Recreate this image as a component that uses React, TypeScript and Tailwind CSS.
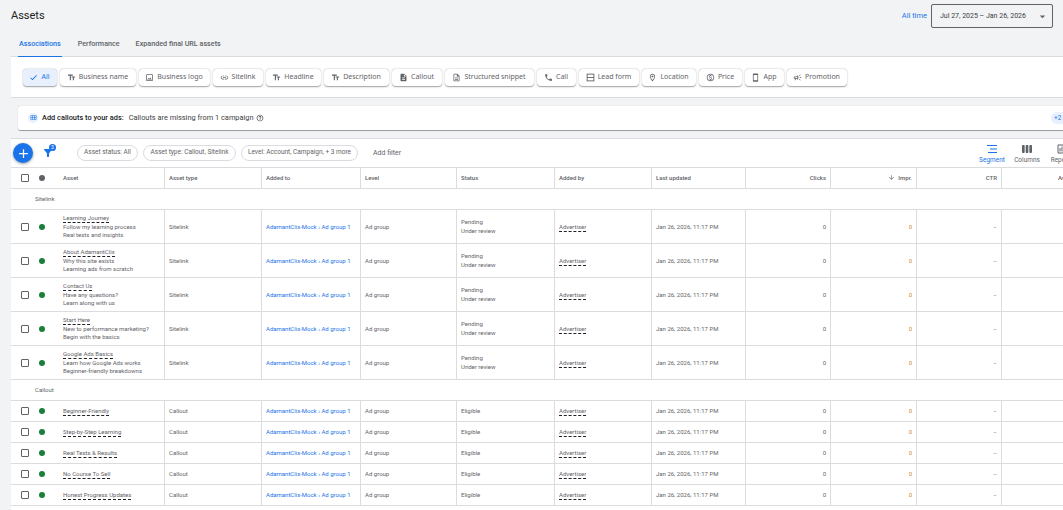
import type { ReactNode } from 'react';
import {
  MdAdd,
  MdArrowDownward,
  MdArrowDropDown,
  MdCheck,
  MdDescription,
  MdFilterAlt,
  MdLink,
  MdOutlineHelpOutline,
  MdOutlineImage,
  MdOutlineLocationOn,
  MdOutlinePaid,
  MdOutlineSmartphone,
  MdOutlineCampaign,
  MdOutlineDescription,
  MdPhone,
  MdTextFields,
  MdViewWeek,
  MdOutlineAssessment,
  MdOutlineCalendarViewMonth,
} from 'react-icons/md';

const LEAD_FORM_ICON = (
  <svg viewBox="0 0 12 12" className="size-[9px]" fill="none" stroke="currentColor" strokeWidth="1.2">
    <rect x="1.5" y="1.5" width="9" height="9" />
    <path d="M1.5 6h9" />
  </svg>
);

const CHIPS: { label: string; icon: ReactNode; width: string }[] = [
  { label: 'Business name', icon: <MdTextFields />, width: 'w-[76px]' },
  { label: 'Business logo', icon: <MdOutlineImage />, width: 'w-[71px]' },
  { label: 'Sitelink', icon: <MdLink />, width: 'w-[50px]' },
  { label: 'Headline', icon: <MdTextFields />, width: 'w-[55px]' },
  { label: 'Description', icon: <MdTextFields />, width: 'w-[65px]' },
  { label: 'Callout', icon: <MdDescription />, width: 'w-[50px]' },
  { label: 'Structured snippet', icon: <MdOutlineDescription />, width: 'w-[89px]' },
  { label: 'Call', icon: <MdPhone />, width: 'w-[39px]' },
  { label: 'Lead form', icon: LEAD_FORM_ICON, width: 'w-[60px]' },
  { label: 'Location', icon: <MdOutlineLocationOn />, width: 'w-[54px]' },
  { label: 'Price', icon: <MdOutlinePaid />, width: 'w-[43px]' },
  { label: 'App', icon: <MdOutlineSmartphone />, width: 'w-[39px]' },
  { label: 'Promotion', icon: <MdOutlineCampaign />, width: 'w-[60px]' },
];

const SITELINKS = [
  ['Learning Journey', 'Follow my learning process', 'Real tests and insights'],
  ['About AdamantClix', 'Why this site exists', 'Learning ads from scratch'],
  ['Contact Us', 'Have any questions?', 'Learn along with us'],
  ['Start Here', 'New to performance marketing?', 'Begin with the basics'],
  ['Google Ads Basics', 'Learn how Google Ads works', 'Beginner-friendly breakdowns'],
];

const CALLOUTS = [
  'Beginner-Friendly',
  'Step-by-Step Learning',
  'Real Tests & Results',
  'No Course To Sell',
  'Honest Progress Updates',
];

const COL_WIDTHS = [
  'w-[23px]',
  'w-[18px]',
  'w-[113px]',
  'w-[97px]',
  'w-[99px]',
  'w-[96px]',
  'w-[98px]',
  'w-[97px]',
  'w-[94px]',
  'w-[85px]',
  'w-[86px]',
  'w-[85px]',
  'w-[84px]',
];

const cell = 'border-b border-r border-[#dadce0] pl-[4px] pr-[4px] align-middle';
const numCell = 'border-b border-r border-[#dadce0] pl-[5px] pr-[4px] align-middle text-right';

function Checkbox() {
  return <div className="ml-[10px] size-[8px] rounded-[1px] border border-[#5f6368] bg-white" />;
}

function Dashed({ children }: { children: ReactNode }) {
  return <span className="inline-block border-b border-dashed border-[#202124] leading-[8px] text-[#5f6368]">{children}</span>;
}

function RowTail({ type, status }: { type: string; status: ReactNode }) {
  return (
    <>
      <td className={`${cell} text-[#5f6368]`}>{type}</td>
      <td className={`${cell} whitespace-nowrap text-[#1a73e8]`}>AdamantClix-Mock › Ad group 1</td>
      <td className={`${cell} text-[#5f6368]`}>Ad group</td>
      <td className={`${cell} text-[#5f6368]`}>{status}</td>
      <td className={cell}>
        <Dashed>Advertiser</Dashed>
      </td>
      <td className={`${cell} whitespace-nowrap text-[#5f6368]`}>Jan 26, 2026, 11:17 PM</td>
      <td className={`${numCell} text-[#5f6368]`}>0</td>
      <td className={`${numCell} text-[#c98a2b]`}>0</td>
      <td className={`${numCell} text-[#80868b]`}>–</td>
      <td className="border-b border-[#dadce0]" />
    </>
  );
}

function GroupRow({ label }: { label: string }) {
  return (
    <tr className="h-[21px]">
      <td colSpan={13} className="border-b border-[#dadce0] pb-[1px] pl-[24px] text-[#5f6368]">
        {label}
      </td>
    </tr>
  );
}

function StatusDot() {
  return <div className="ml-[5px] size-[6px] rounded-full bg-[#188038]" />;
}

function ToolButton({ label, icon, blue }: { label: string; icon: ReactNode; blue?: boolean }) {
  return (
    <div className={`flex w-[34px] shrink-0 flex-col items-center gap-[1px] text-[6.5px] ${blue ? 'text-[#1a73e8]' : 'text-[#5f6368]'}`}>
      <span className="text-[12px] leading-[12px]">{icon}</span>
      <span className="leading-[8px]">{label}</span>
    </div>
  );
}

export default function App() {
  return (
    <div className="h-[510px] w-[1063px] overflow-hidden bg-[#f1f3f4] pl-[11px] font-['Roboto',sans-serif] text-[6px] text-[#5f6368]">
      <div className="flex h-[32px] items-start justify-between">
        <h1 className="pt-[9px] text-[11px] leading-[14px] text-[#202124]">Assets</h1>
        <div className="flex items-center gap-[4px] pt-[4px] pr-[10px]">
          <span className="text-[7.5px] text-[#1a73e8]">All time</span>
          <div className="flex h-[24px] w-[122px] items-center justify-between rounded-[2px] border border-[#5f6368] pr-[3px] pl-[8px] text-[7px] text-[#3c4043]">
            Jul 27, 2025 – Jan 26, 2026
            <MdArrowDropDown className="text-[13px] text-[#5f6368]" />
          </div>
        </div>
      </div>

      <div className="flex h-[25px] items-stretch gap-[16px] border-b border-[#dadce0] pl-[7px] text-[7.2px] font-medium text-[#5f6368]">
        <div className="-mb-px flex items-center border-b border-[#1a73e8] px-px pt-[1px] text-[#1a73e8]">Associations</div>
        <div className="flex items-center pt-[1px]">Performance</div>
        <div className="flex items-center pt-[1px]">Expanded final URL assets</div>
      </div>

      <div className="flex h-[41px] items-center gap-[3px] border-b border-[#dadce0] bg-white pl-[11.5px] font-['Noto_Sans',sans-serif] text-[7px] text-[#5f6368]">
        <div className="flex h-[17px] w-[34px] items-center justify-center gap-[3px] rounded-[4px] bg-[#e8f0fe] text-[#1a73e8] shadow-[0_0.5px_1.5px_rgba(60,64,67,0.5)]">
          <MdCheck className="text-[9px]" />
          All
        </div>
        {CHIPS.map((chip) => (
          <div
            key={chip.label}
            className={`flex h-[17px] shrink-0 items-center justify-center gap-[3px] rounded-[4px] bg-white whitespace-nowrap shadow-[0_0.5px_1.5px_rgba(60,64,67,0.5)] ${chip.width}`}
          >
            <span className="text-[9px] leading-none">{chip.icon}</span>
            {chip.label}
          </div>
        ))}
      </div>

      <div className="mt-[8px] ml-[7px] flex h-[25px] items-center justify-between rounded-l-[3px] border-b border-[#9aa0a6] bg-white pl-[10px] text-[7.4px] shadow-[0_0_1px_rgba(60,64,67,0.3)]">
        <div className="flex items-center gap-[4px]">
          <div className="flex size-[10px] items-center justify-center rounded-full bg-[#e8f0fe] text-[7px] text-[#1a73e8]">
            <MdOutlineCalendarViewMonth />
          </div>
          <span className="font-medium text-[#202124]">Add callouts to your ads:</span>
          <span className="ml-[1px] flex items-center gap-[2px] text-[#3c4043]">
            Callouts are missing from 1 campaign
            <MdOutlineHelpOutline className="text-[8px]" />
          </span>
        </div>
        <div className="h-[12px] w-[12px] rounded-l-full bg-[#e8f0fe] pt-[2px] pl-[3px] text-[6.5px] leading-[8px] whitespace-nowrap text-[#1a73e8]">+2</div>
      </div>

      <div className="relative mt-[7px] flex h-[30px] items-center border-y border-[#dadce0] bg-white pl-[2px]">
        <div className="flex size-[20px] shrink-0 items-center justify-center rounded-full bg-[#1a73e8] text-[15px] text-white shadow-[0_1px_3px_rgba(60,64,67,0.5)]">
          <MdAdd />
        </div>
        <div className="relative ml-[9px] text-[12px] text-[#1a73e8]">
          <MdFilterAlt />
          <span className="absolute -top-[3px] left-[7px] flex size-[7px] items-center justify-center rounded-full bg-[#1a73e8] text-[5px] text-white">3</span>
        </div>
        <div className="ml-[23px] flex items-center gap-[5px] text-[6.5px] whitespace-nowrap text-[#5f6368]">
          <div className="flex h-[16px] w-[61px] items-center justify-center rounded-full border border-[#dadce0]">Asset status: All</div>
          <div className="flex h-[16px] w-[93px] items-center justify-center rounded-full border border-[#dadce0]">Asset type: Callout, Sitelink</div>
          <div className="flex h-[16px] w-[117px] items-center justify-center rounded-full border border-[#dadce0]">Level: Account, Campaign, + 3 more</div>
          <div className="ml-[10px] text-[7px]">Add filter</div>
        </div>
        <div className="-mr-[16px] ml-auto flex items-center gap-[1px]">
          <ToolButton
            blue
            label="Segment"
            icon={
              <svg viewBox="0 0 12 12" className="size-[12px]" fill="currentColor">
                <rect x="1" y="2" width="10" height="1" />
                <rect x="4" y="5.5" width="7" height="1" />
                <rect x="2" y="9" width="9" height="1" />
              </svg>
            }
          />
          <ToolButton label="Columns" icon={<MdViewWeek />} />
          <ToolButton label="Reports" icon={<MdOutlineAssessment />} />
        </div>
      </div>

      <div className="bg-white">
        <table className="w-[1075px] table-fixed border-separate border-spacing-0 text-left">
          <colgroup>
            {COL_WIDTHS.map((w, i) => (
              <col key={i} className={w} />
            ))}
          </colgroup>
          <thead>
            <tr className="h-[21px] [&>th:nth-child(n+3)]:pb-[1px]">
              <th className="border-b border-[#dadce0] font-medium">
                <Checkbox />
              </th>
              <th className="border-b border-[#dadce0] font-medium">
                <div className="ml-[5px] size-[6px] rounded-full bg-[#5f6368]" />
              </th>
              <th className="border-r border-b border-[#dadce0] pl-[11px] font-medium">Asset</th>
              <th className={`${cell} font-medium`}>Asset type</th>
              <th className={`${cell} font-medium`}>Added to</th>
              <th className={`${cell} font-medium`}>Level</th>
              <th className={`${cell} font-medium`}>Status</th>
              <th className={`${cell} font-medium`}>Added by</th>
              <th className={`${cell} font-medium`}>Last updated</th>
              <th className={`${numCell} font-medium`}>Clicks</th>
              <th className={`${numCell} font-medium`}>
                <span className="inline-flex items-center gap-[3px]">
                  <MdArrowDownward className="text-[7px]" />
                  Impr.
                </span>
              </th>
              <th className={`${numCell} font-medium`}>CTR</th>
              <th className="border-b border-[#dadce0] pl-[56px] font-medium whitespace-nowrap">Avg. CPC</th>
            </tr>
          </thead>
          <tbody>
            <GroupRow label="Sitelink" />
            {SITELINKS.map(([title, line1, line2]) => (
              <tr key={title} className="h-[34px]">
                <td className="border-b border-[#dadce0]">
                  <Checkbox />
                </td>
                <td className="border-b border-[#dadce0]">
                  <StatusDot />
                </td>
                <td className="border-r border-b border-[#dadce0] pl-[11px] leading-[8.5px] whitespace-nowrap">
                  <Dashed>{title}</Dashed>
                  <div>{line1}</div>
                  <div>{line2}</div>
                </td>
                <RowTail
                  type="Sitelink"
                  status={
                    <div className="leading-[8.5px]">
                      <div>Pending</div>
                      <div>Under review</div>
                    </div>
                  }
                />
              </tr>
            ))}
            <GroupRow label="Callout" />
            {CALLOUTS.map((title) => (
              <tr key={title} className="h-[21px] [&>td:nth-child(n+3)]:pb-[1px]">
                <td className="border-b border-[#dadce0]">
                  <Checkbox />
                </td>
                <td className="border-b border-[#dadce0]">
                  <StatusDot />
                </td>
                <td className="border-r border-b border-[#dadce0] pl-[11px] whitespace-nowrap">
                  <Dashed>{title}</Dashed>
                </td>
                <RowTail type="Callout" status="Eligible" />
              </tr>
            ))}
          </tbody>
        </table>
        <div className="h-[20px]" />
      </div>
    </div>
  );
}
